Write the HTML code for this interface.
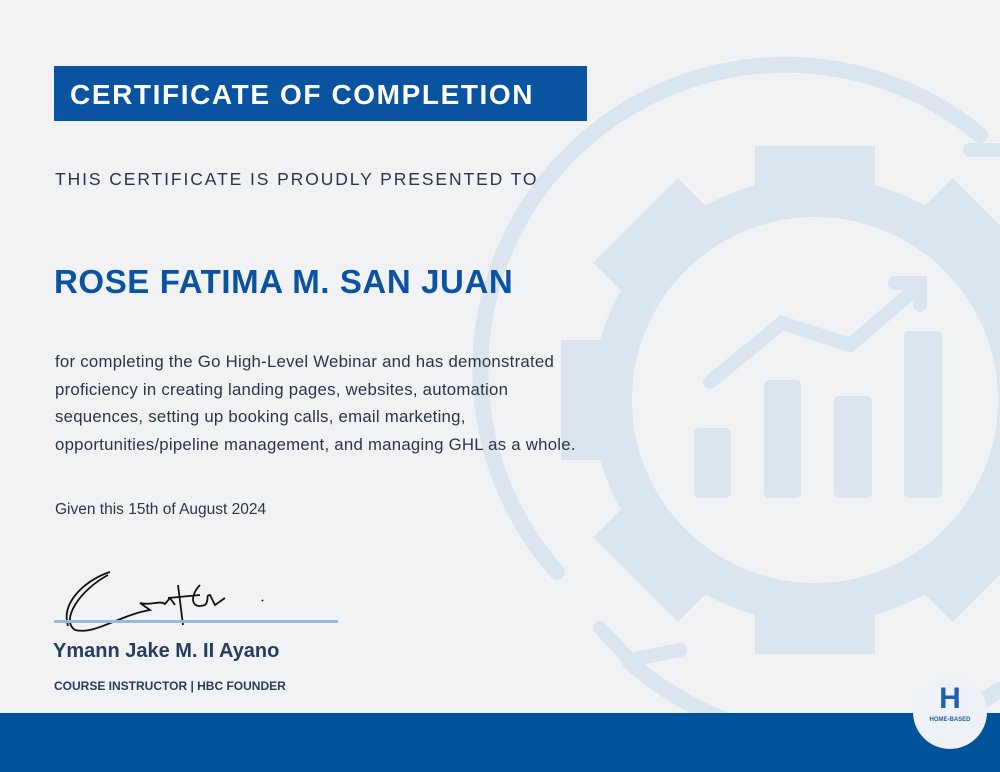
<!DOCTYPE html>
<html><head><meta charset="utf-8"><style>
body{margin:0;width:1000px;height:772px;overflow:hidden;background:#f1f2f4;font-family:"Liberation Sans",sans-serif;position:relative}
.abs{position:absolute}
.title{left:54px;top:66px;width:533px;height:55px;background:#0a53a0;color:#fff;font-weight:bold;font-size:28px;letter-spacing:1.6px;line-height:58px;padding-left:16px;box-sizing:border-box}
.sub{left:55px;top:169px;font-size:17.5px;letter-spacing:1.9px;color:#2a3547}
.name{left:54px;top:263px;font-size:33px;font-weight:bold;color:#0a53a0;letter-spacing:.6px}
.body{left:55px;top:348px;font-size:16.8px;line-height:27.5px;color:#2a3547;width:525px;letter-spacing:.25px}
.date{left:55px;top:501px;font-size:15.5px;color:#2a3547}
.sig{left:53px;top:640px;font-size:20px;font-weight:bold;color:#263d5e}
.role{left:54px;top:679px;font-size:12px;font-weight:bold;color:#263d5e}
.bar{left:0;top:713px;width:1000px;height:59px;background:#00529b}
</style></head><body>
<svg class="abs" style="left:0;top:0" width="1000" height="772">
<g fill="none" stroke="#dbe5ef" stroke-linecap="round">
<path d="M557 572 A305 305 0 0 1 980 135" stroke-width="16"/>
<path d="M630 662 A305 305 0 0 0 1000 690" stroke-width="16"/>
<path d="M600 628 L630 660 L680 650" stroke-width="14"/>
<path d="M970 150 L1000 150" stroke-width="14"/>
<circle cx="815" cy="400" r="203" stroke-width="40"/>
<path d="M710 382 L782 323 L850 345 L918 287" stroke-width="14"/>
<path d="M895 283 L920 283 L920 305" stroke-width="14"/>
</g>
<g fill="#dbe5ef">
<g transform="translate(815 400)">
<rect x="-60" y="-254" width="120" height="60"/>
<rect x="-60" y="-254" width="120" height="60" transform="rotate(45)"/>
<rect x="-60" y="-254" width="120" height="60" transform="rotate(90)"/>
<rect x="-60" y="-254" width="120" height="60" transform="rotate(135)"/>
<rect x="-60" y="-254" width="120" height="60" transform="rotate(180)"/>
<rect x="-60" y="-254" width="120" height="60" transform="rotate(225)"/>
<rect x="-60" y="-254" width="120" height="60" transform="rotate(270)"/>
<rect x="-60" y="-254" width="120" height="60" transform="rotate(315)"/>
</g>
<rect x="694" y="428" width="37" height="70" rx="5"/>
<rect x="764" y="380" width="37" height="118" rx="5"/>
<rect x="834" y="396" width="38" height="102" rx="5"/>
<rect x="904" y="331" width="38" height="167" rx="5"/>
</g>
<path d="M68 626 C60 600 90 578 110 572 M108 575 C80 590 60 620 75 630 C95 635 120 615 150 610 L140 603 C150 606 160 600 165 604 L170 598 L175 605 M178 585 L183 625 M168 598 L200 595 M200 585 C190 595 190 610 205 605 C210 600 205 595 210 595 L215 605 L225 598 M262 600 l1 1" fill="none" stroke="#111" stroke-width="1.8"/>
<rect x="54" y="620" width="284" height="3" fill="#9bb8d8"/>
</svg>
<div class="abs title">CERTIFICATE OF COMPLETION</div>
<div class="abs sub">THIS CERTIFICATE IS PROUDLY PRESENTED TO</div>
<div class="abs name">ROSE FATIMA M. SAN JUAN</div>
<div class="abs body">for completing the Go High-Level Webinar and has demonstrated proficiency in creating landing pages, websites, automation sequences, setting up booking calls, email marketing, opportunities/pipeline management, and managing GHL as a whole.</div>
<div class="abs date">Given this 15th of August 2024</div>
<div class="abs sig">Ymann Jake M. II Ayano</div>
<div class="abs role">COURSE INSTRUCTOR | HBC FOUNDER</div>
<div class="abs bar"></div>
<div class="abs" style="left:913px;top:675px;width:74px;height:74px;border-radius:50%;background:#eef1f5;text-align:center">
<div style="color:#1f5fae;font-weight:bold;font-size:30px;line-height:36px;margin-top:6px">H</div>
<div style="color:#1f5fae;font-weight:bold;font-size:6px">HOME-BASED</div>
</div>
</body></html>
